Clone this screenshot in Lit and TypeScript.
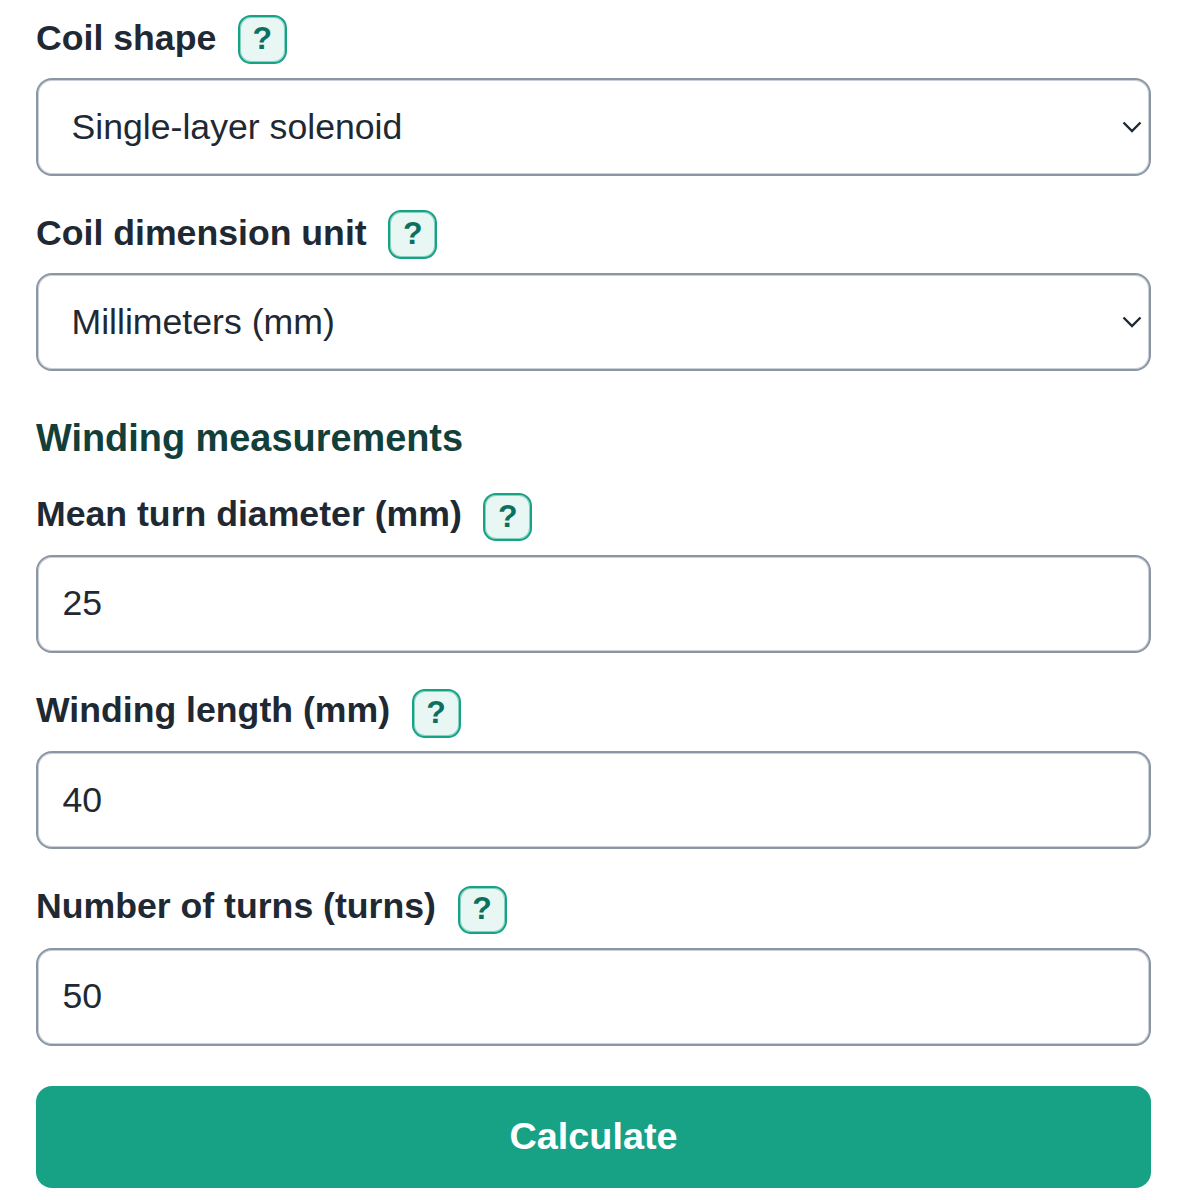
import { LitElement, html, css } from "lit";
import { customElement } from "lit/decorators.js";

const chevron = html`<svg class="chev" viewBox="0 0 20 12" aria-hidden="true"><path d="M1.5 1.5 L10 10 L18.5 1.5" fill="none" stroke="#1f2933" stroke-width="2.4"/></svg>`;

@customElement("app-root")
export class AppRoot extends LitElement {
  static styles = css`
    :host { display: block; height: 1200px; overflow: hidden; background: #fff; font-family: "Liberation Sans", Arial, sans-serif; color: #1f2933; }
    .form { display: flex; flex-direction: column; padding: 15.4px 49px 0 36px; }
    .field { display: flex; flex-direction: column; gap: 13.6px; margin-bottom: 36.2px; }
    .field.sel { margin-bottom: 34.8px; }
    .label-row { display: flex; align-items: center; gap: 21.6px; height: 48.6px; }
    label { font-size: 35.65px; font-weight: 700; line-height: 49px; margin-bottom: 6px; }
    .sel label { margin-bottom: 3px; }
    .help { box-sizing: border-box; width: 49px; height: 48.6px; border: 2px solid #17a185; box-shadow: inset 0 0 0 1px rgba(23, 161, 133, 0.45); border-radius: 13px; background: #e8f7f3; color: #0f6f5d; font-size: 32px; font-weight: 700; display: flex; align-items: center; justify-content: center; padding-bottom: 2px; }
    .control { box-sizing: border-box; height: 98px; border: 2px solid #8a96a3; box-shadow: inset 0 0 0 1px rgba(138, 150, 163, 0.45); border-radius: 16px; background: #fff; display: flex; align-items: center; justify-content: space-between; font-size: 35.65px; color: #1f2933; }
    .select { padding: 2px 7px 0 33.5px; }
    .select .chev { margin-top: -2px; }
    .input { padding: 0 24.5px; }
    .chev { width: 20px; height: 12px; }
    h3 { margin: 9px 0 29.4px; font-size: 37.9px; line-height: 49px; font-weight: 700; color: #123f3a; }
    button { box-sizing: border-box; height: 102px; margin-top: 4px; padding: 0; border: 0; border-radius: 16px; background: #17a185; color: #fff; font: 700 37.8px "Liberation Sans", Arial, sans-serif; }
  `;

  field(label: string, value: string, select = false) {
    return html`<div class="field ${select ? "sel" : ""}">
      <div class="label-row"><label>${label}</label><span class="help">?</span></div>
      ${select
        ? html`<div class="control select"><span>${value}</span>${chevron}</div>`
        : html`<div class="control input"><span>${value}</span></div>`}
    </div>`;
  }

  render() {
    return html`<div class="form">
      ${this.field("Coil shape", "Single-layer solenoid", true)}
      ${this.field("Coil dimension unit", "Millimeters (mm)", true)}
      <h3>Winding measurements</h3>
      ${this.field("Mean turn diameter (mm)", "25")}
      ${this.field("Winding length (mm)", "40")}
      ${this.field("Number of turns (turns)", "50")}
      <button>Calculate</button>
    </div>`;
  }
}
